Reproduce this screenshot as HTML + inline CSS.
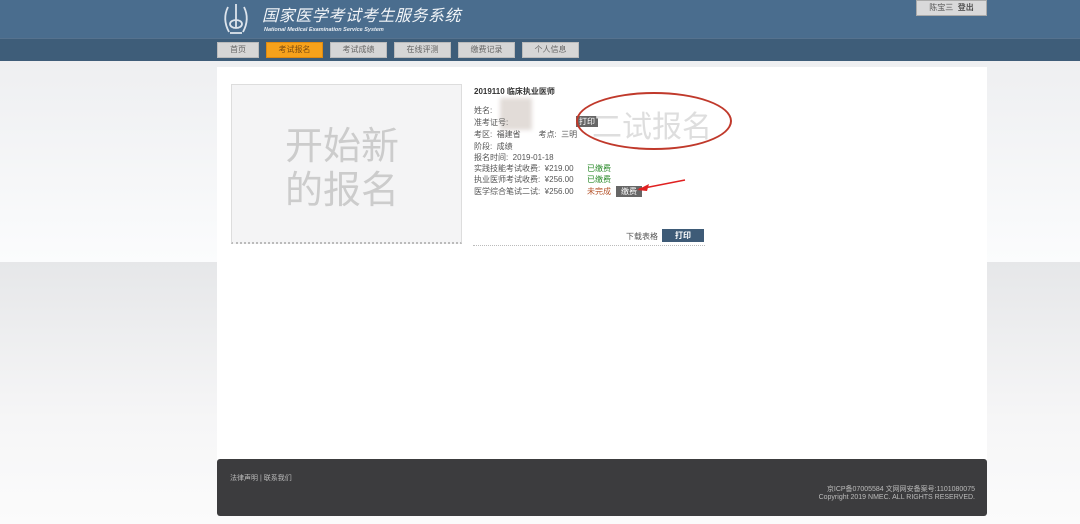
<!DOCTYPE html>
<html><head><meta charset="utf-8"><style>
*{margin:0;padding:0;box-sizing:border-box}
body{width:1080px;height:524px;overflow:hidden;position:relative;font-family:"Liberation Sans","Noto Sans CJK SC",sans-serif;background:linear-gradient(#e6e7e9 262px,#f6f6f7 420px,#fbfbfb 524px);}
.hdr{position:absolute;left:0;top:0;width:1080px;height:38px;background:#4a6d8e}
.nav{position:absolute;left:0;top:38px;width:1080px;height:23px;background:#3e5d79;border-top:1px solid #56728e}
.band{position:absolute;left:0;top:61px;width:1080px;height:201px;background:linear-gradient(#eeeff1,#fbfcfd)}
.main{position:absolute;left:217px;top:67px;width:770px;height:400px;background:#fff}
.btn{position:absolute;top:42px;height:16px;background:#d6d6d6;border:1px solid #bbb;font-size:8px;color:#666;text-align:center;line-height:14px}
.t{position:absolute;font-size:8px;color:#555;white-space:nowrap}
.foot{position:absolute;left:217px;top:459px;width:770px;height:57px;background:#3c3c3e;border-radius:3px}
</style></head><body>
<div class="band"></div>
<div class="hdr">
 <svg style="position:absolute;left:220px;top:2px" width="32" height="34" viewBox="0 0 32 34"><g fill="none" stroke="#dde4ec" stroke-width="1.8"><path d="M8 5 Q2 17 9 30"/><path d="M24 5 Q30 17 23 30"/><path d="M16 2 V26"/><ellipse cx="16" cy="22" rx="6" ry="4"/><path d="M10 31 H22"/></g></svg>
 <div style="position:absolute;left:262px;top:8px;font-size:16px;line-height:18px;color:#f2f5f8;font-style:italic;letter-spacing:0.6px">国家医学考试考生服务系统</div>
 <div style="position:absolute;left:264px;top:27px;font-size:5.5px;line-height:6px;color:#e8edf2;font-weight:bold;font-style:italic">National Medical Examination Service System</div>
 <div style="position:absolute;left:916px;top:0;width:71px;height:16px;background:#d9d9da;border:1px solid #aaa;font-size:8px;color:#555;text-align:center;line-height:14px">陈宝三 &nbsp;<b>登出</b></div>
</div>
<div class="nav"></div>
<div class="btn" style="left:217px;width:42px">首页</div>
<div class="btn" style="left:266px;width:57px;background:#f7a21b;border-color:#e08a10;color:#7a4a10">考试报名</div>
<div class="btn" style="left:330px;width:57px">考试成绩</div>
<div class="btn" style="left:394px;width:57px">在线评测</div>
<div class="btn" style="left:458px;width:57px">缴费记录</div>
<div class="btn" style="left:522px;width:57px">个人信息</div>
<div class="main"></div>
<div style="position:absolute;left:231px;top:84px;width:231px;height:160px;background:#f4f4f5;border:1px solid #ddd;border-bottom:2px dotted #bbb"></div>
<div style="position:absolute;left:285px;top:125px;font-size:38px;line-height:44px;color:#ccc">开始新<br>的报名</div>
<div style="position:absolute;left:473px;top:245px;width:232px;border-top:1px dotted #bbb"></div>
<div class="t" style="left:474px;top:86px;font-weight:bold;color:#333">2019110 临床执业医师</div>
<div class="t" style="left:474px;top:105px">姓名:</div>
<div style="position:absolute;left:500px;top:98px;width:32px;height:32px;background:#e2dcd8;filter:blur(2px)"></div>
<div class="t" style="left:474px;top:117px">准考证号:</div>
<div class="t" style="left:576px;top:116px;background:#666;color:#fff;padding:0 3px">打印</div>
<div class="t" style="left:474px;top:129px">考区: &nbsp;福建省 &nbsp;&nbsp;&nbsp;&nbsp;&nbsp;&nbsp;&nbsp;考点: &nbsp;三明</div>
<div class="t" style="left:474px;top:141px">阶段: &nbsp;成绩</div>
<div class="t" style="left:474px;top:152px">报名时间: &nbsp;2019-01-18</div>
<div class="t" style="left:474px;top:163px">实践技能考试收费: &nbsp;¥219.00</div>
<div class="t" style="left:587px;top:163px;color:#2a8a2a">已缴费</div>
<div class="t" style="left:474px;top:174px">执业医师考试收费: &nbsp;¥256.00</div>
<div class="t" style="left:587px;top:174px;color:#2a8a2a">已缴费</div>
<div class="t" style="left:474px;top:186px">医学综合笔试二试: &nbsp;¥256.00</div>
<div class="t" style="left:587px;top:186px;color:#b5532a">未完成</div>
<div class="t" style="left:616px;top:186px;background:#666;color:#fff;padding:0 5px">缴费</div>
<svg style="position:absolute;left:635px;top:178px" width="52" height="16"><path d="M4 11 L50 2" stroke="#e02020" stroke-width="1.5"/><path d="M2 12 L14 6 L12 13 Z" fill="#e02020"/></svg>
<div style="position:absolute;left:576px;top:92px;width:156px;height:58px;border:2px solid #c0392b;border-radius:50%"></div>
<div style="position:absolute;left:592px;top:102px;font-size:30px;color:#dedede">二试报名</div>
<div class="t" style="left:626px;top:231px">下载表格</div>
<div class="t" style="left:662px;top:229px;width:42px;height:13px;background:#3e5b77;color:#fff;text-align:center;line-height:13px;font-weight:bold">打印</div>
<div class="foot"></div>
<div class="t" style="left:230px;top:473px;color:#bbb;font-size:7px">法律声明 | 联系我们</div>
<div class="t" style="left:975px;top:484px;color:#bbb;font-size:7px;transform:translateX(-100%)">京ICP备07005584 文网网安备案号:1101080075</div>
<div class="t" style="left:975px;top:494px;color:#bbb;font-size:7px;transform:translateX(-100%)">Copyright 2019 NMEC. ALL RIGHTS RESERVED.</div>
</body></html>
